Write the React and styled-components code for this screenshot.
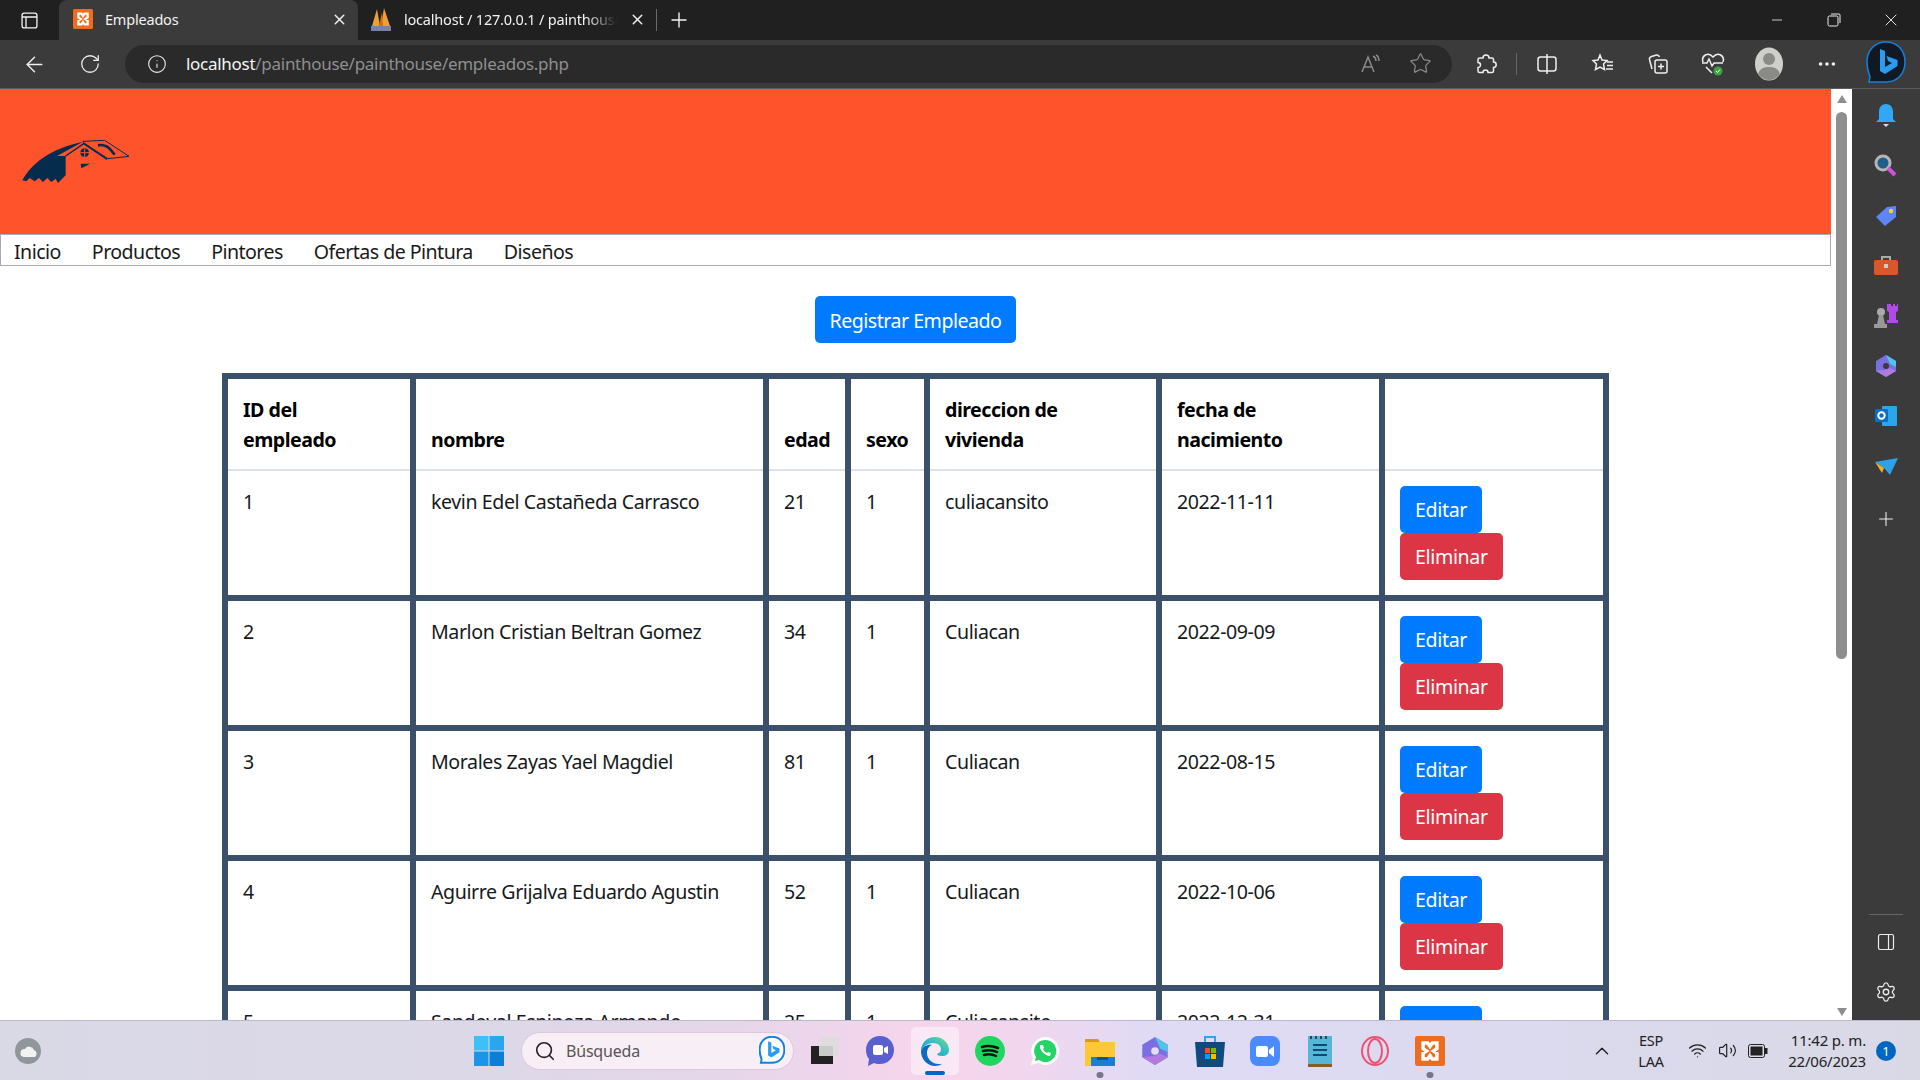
import React from 'react';
import styled, { createGlobalStyle } from 'styled-components';
import { ArrowLeft, RotateCw, Info, Star, Plus, X, Minus, MoreHorizontal, Search, ChevronUp, Wifi, Volume2, Settings, PanelRight } from 'lucide-react';

const Global = createGlobalStyle`
  html, body { margin: 0; padding: 0; height: 100%; overflow: hidden; background: #fff; }
  body { font-family: "Noto Sans", "Open Sans", sans-serif; color: #111; }
  * { box-sizing: border-box; }
`;

const Screen = styled.div`
  width: 1920px;
  height: 1080px;
  display: flex;
  flex-direction: column;
  overflow: hidden;
`;

/* browser chrome */
const TabStrip = styled.div`
  height: 40px;
  background: #202020;
  display: flex;
  align-items: stretch;
  color: #f2f2f2;
  flex: none;
`;
const StripButton = styled.div`
  width: 59px;
  display: flex;
  align-items: center;
  justify-content: center;
`;
const Tab = styled.div`
  width: ${p => p.$w}px;
  background: ${p => (p.$active ? '#3b3b3b' : 'transparent')};
  border-radius: 8px 8px 0 0;
  display: flex;
  align-items: center;
  padding: 0 10px 2px ${p => p.$pl}px;
  gap: 12px;
`;
const TabTitle = styled.span`
  flex: 1;
  font-size: 14.5px;
  letter-spacing: -0.2px;
  white-space: nowrap;
  overflow: hidden;
  ${p => p.$fade && 'mask-image: linear-gradient(90deg, #000 85%, transparent 100%);'}
`;
const StripDivider = styled.div`
  width: 1px;
  height: 22px;
  margin: 9px 0;
  background: #6a6a6a;
`;
const NewTab = styled.div`
  width: 44px;
  display: flex;
  align-items: center;
  justify-content: center;
`;
const WindowControls = styled.div`
  margin-left: auto;
  display: flex;
  padding-right: 1px;
`;
const WindowButton = styled.div`
  width: 57px;
  display: flex;
  align-items: center;
  justify-content: center;
`;
const Toolbar = styled.div`
  height: 49px;
  background: #3b3b3b;
  border-bottom: 1px solid #5c5c5c;
  display: flex;
  align-items: center;
  flex: none;
  color: #eee;
`;
const NavIcon = styled.div`
  width: ${p => p.$w || 55}px;
  margin-left: ${p => p.$ml || 0}px;
  color: ${p => (p.$dim ? '#8a8a8a' : 'inherit')};
  display: flex;
  align-items: center;
  justify-content: center;
  flex: none;
`;
const AddressBar = styled.div`
  width: 1327px;
  height: 38px;
  margin: 0 0 1px 13px;
  background: #2a2a2a;
  border-radius: 19px;
  display: flex;
  align-items: center;
  padding-left: 22px;
  flex: none;
`;
const Url = styled.div`
  margin-left: 19px;
  flex: 1;
  font-size: 17px;
  letter-spacing: -0.28px;
  color: #8f8f8f;
  & b { font-weight: 400; color: #f5f5f5; }
`;
const BarDivider = styled.div`
  width: 1px;
  height: 22px;
  background: #666;
  flex: none;
`;

/* main region */
const Body = styled.div`
  flex: 1;
  min-height: 0;
  display: flex;
`;
const Page = styled.main`
  width: 1831px;
  flex: none;
  overflow: hidden;
  background: #fff;
`;
const Header = styled.header`
  height: 145px;
  background: #ff542b;
  padding: 43px 0 0 13px;
`;
const Menu = styled.nav`
  height: 32px;
  background: #fff;
  border: 1px solid #aaaabb;
  display: flex;
  align-items: center;
  padding: 2px 0 0 13px;
  font-size: 19.6px;
  letter-spacing: -0.55px;
  color: #1a1a1a;
  & span { margin-right: 31px; }
`;
const Center = styled.div`
  padding: 30px 0;
  display: flex;
  justify-content: center;
`;
const Btn = styled.button`
  display: block;
  height: 47px;
  padding: 0 15px;
  border: 0;
  border-radius: 5px;
  background: ${p => (p.$danger ? '#dc3545' : '#007bff')};
  color: #fff;
  font-family: inherit;
  font-size: 19.6px;
  letter-spacing: -0.36px;
  white-space: nowrap;
`;
const RegisterBtn = styled(Btn)`
  padding-top: 2px;
  letter-spacing: -0.5px;
`;
const ActionStack = styled.div`
  display: flex;
  flex-direction: column;
  align-items: flex-start;
`;
const Table = styled.table`
  width: 1387px;
  margin-left: 222px;
  table-layout: fixed;
  border-collapse: collapse;
  font-size: 19.6px;
  letter-spacing: -0.42px;
  line-height: 30px;
  color: #16191c;
`;
const Th = styled.th`
  border: 6px solid #3a506b;
  border-bottom: 2px solid #dee2e6;
  padding: 16px 15px 14px;
  text-align: left;
  vertical-align: bottom;
  font-weight: 700;
  letter-spacing: -0.5px;
  color: #000;
`;
const Td = styled.td`
  border: 6px solid #3a506b;
  border-top: 0;
  padding: ${p => (p.$action ? '15px' : '16px 15px 14px')};
  vertical-align: top;
`;

/* page scrollbar + edge sidebar */
const Scrollbar = styled.div`
  width: 21px;
  flex: none;
  background: #fff;
  padding: 0 5px;
  display: flex;
  flex-direction: column;
  align-items: center;
`;
const Arrow = styled.div`
  width: 0;
  height: 0;
  flex: none;
  border-left: 5px solid transparent;
  border-right: 5px solid transparent;
  ${p => (p.$down ? 'border-top: 8px solid #8e8e8e; margin-top: auto; margin-bottom: 4px;' : 'border-bottom: 8px solid #8e8e8e; margin-top: 6px;')}
`;
const Thumb = styled.div`
  width: 11px;
  height: 547px;
  margin-top: 9px;
  background: #8e8e8e;
  border-radius: 6px;
  flex: none;
`;
const Sidebar = styled.aside`
  width: 68px;
  flex: none;
  background: #3b3b3b;
  display: flex;
  flex-direction: column;
  align-items: center;
  padding: 2px 0 3px;
  color: #eee;
`;
const SideSlot = styled.div`
  height: 50px;
  width: 100%;
  margin-top: ${p => p.$mt || 0}px;
  display: flex;
  align-items: center;
  justify-content: center;
  flex: none;
`;
const SideRule = styled.div`
  width: 34px;
  height: 1px;
  margin-top: auto;
  margin-bottom: 2px;
  background: #666;
`;

/* taskbar */
const Taskbar = styled.footer`
  height: 60px;
  flex: none;
  border-top: 1px solid #bcb7ca;
  background: linear-gradient(90deg, #d9d9e6 0%, #dcd8e8 25%, #e6d6ea 38%, #f6d5ec 48%, #f2d6ee 53%, #e0dbf5 60%, #dbdaf0 75%, #d9d9e6 100%);
  display: flex;
  align-items: center;
  color: #222;
`;
const Weather = styled.div`
  width: 461px;
  padding-left: 14px;
  flex: none;
  display: flex;
`;
const StartSlot = styled.div`
  width: 55px;
  display: flex;
  justify-content: center;
  flex: none;
`;
const SearchBox = styled.div`
  width: 273px;
  height: 38px;
  margin: 0 3px 0 5px;
  border-radius: 19px;
  background: #f8eef6;
  border: 1px solid #dcc9dc;
  display: flex;
  align-items: center;
  padding: 0 8px 0 12px;
  gap: 10px;
  flex: none;
  font-size: 16px;
  letter-spacing: -0.2px;
  color: #555;
  & span { flex: 1; }
`;
const AppSlot = styled.div`
  width: ${p => p.$w || 55}px;
  height: 48px;
  flex: none;
  display: flex;
  align-items: center;
  justify-content: center;
  position: relative;
  border-radius: 5px;
  ${p => p.$active && `
    width: 48px;
    margin: 0 3.5px;
    background: rgba(255, 255, 255, .45);
  `}
`;
const RunDot = styled.i`
  position: absolute;
  bottom: ${p => (p.$active ? 0 : -3)}px;
  left: 50%;
  transform: translateX(-50%);
  width: ${p => (p.$active ? 20 : 7)}px;
  height: ${p => (p.$active ? 4 : 6)}px;
  border-radius: 3px;
  background: ${p => (p.$active ? '#0067c0' : '#77778a')};
`;
const Tray = styled.div`
  margin-left: auto;
  display: flex;
  align-items: center;
  padding-right: 24px;
`;
const TrayText = styled.div`
  text-align: center;
  font-size: 14.5px;
  line-height: 21px;
  letter-spacing: -0.2px;
  width: ${p => p.$w}px;
  flex: none;
`;
const TrayIcons = styled.div`
  display: flex;
  align-items: center;
  gap: 11px;
  margin: 0 10px 0 11px;
`;
const ClockText = styled(TrayText)`
  text-align: right;
  font-size: 15px;
`;
const Badge = styled.div`
  width: 20px;
  height: 20px;
  margin-left: 10px;
  border-radius: 50%;
  background: #0067c0;
  color: #fff;
  font-size: 13px;
  display: flex;
  align-items: center;
  justify-content: center;
`;
const Chevron = styled(ChevronUp)`
  margin-right: 12px;
`;

const Xampp = ({ s = 26 }) => (
  <svg width={s} height={s} viewBox="0 0 26 26">
    <rect width="26" height="26" rx="2" fill="#ef6b1e" />
    <path d="M7 6h4l2 3 2-3h4v5l-3 2 3 2v5h-4l-2-3-2 3H7v-5l3-2-3-2z" fill="none" stroke="#fff" strokeWidth="3" />
  </svg>
);
const Pma = () => (
  <svg width="22" height="26" viewBox="0 0 22 26">
    <path d="M2 20 7 3l3 17zM11 20l3-18 6 18z" fill="#f0a030" />
    <path d="M9 20 12 6l1 14z" fill="#c9701a" />
    <rect x="1" y="20" width="20" height="5" fill="#7a80a8" />
  </svg>
);
const Logo = () => (
  <svg width="125" height="60" viewBox="0 0 375 180" display="block">
    <path d="M28 145C55 95 110 50 210 29L132 72h26v58l-23 23-7-13-13 10-12-12-13 12-12-12-13 10-15-10-10 10z" fill="#052c4d" />
    <path d="M158 72 212 35l70 47" fill="none" stroke="#052c4d" strokeWidth="4" />
    <path d="M210 28l65-3 73 48-63 7-73-48z" fill="none" stroke="#052c4d" strokeWidth="3" />
    <path d="M255 40c25-5 35 10 50 28" fill="none" stroke="#052c4d" strokeWidth="8" />
    <circle cx="215" cy="62" r="13" fill="#052c4d" />
    <path d="M215 49v26M202 62h26" stroke="#ff542b" strokeWidth="3" />
    <path d="M203 95h29l-27 14z" fill="#052c4d" />
  </svg>
);
const Icon = ({ children, s = 24, sw = 1.5 }) => (
  <svg width={s} height={s} viewBox="0 0 24 24" fill="none" stroke="currentColor" strokeWidth={sw}>{children}</svg>
);
const BingBubble = ({ w, h, fill, sw }) => (
  <svg width={w} height={h} viewBox="0 0 40 46">
    <path d="M20 1c11 0 19 8 19 20s-8 20-19 20H3l1-5C2 31 1 26 1 21 1 9 9 1 20 1z" fill={fill} stroke="#1380e0" strokeWidth={sw} />
    <path d="M14 8l5 2v16l7-4-4-2-1.5-5 11 4v6L19 33l-5-3z" fill="#2a9bf0" />
  </svg>
);
const CopilotMark = ({ w, h, hole }) => (
  <svg width={w} height={h} viewBox="0 0 22 24">
    <path d="M11 1l10 6v10l-10 6-10-6V7z" fill="#7a6fe0" />
    <path d="M11 1l10 6v6l-6-3z" fill="#4fc3e8" />
    <path d="M1 17l10 6 10-6-6-3-5 2z" fill="#b07adf" />
    <circle cx="11" cy="12" r="3" fill={hole} />
  </svg>
);

const empleados = [
  ['1', 'kevin Edel Castañeda Carrasco', '21', '1', 'culiacansito', '2022-11-11'],
  ['2', 'Marlon Cristian Beltran Gomez', '34', '1', 'Culiacan', '2022-09-09'],
  ['3', 'Morales Zayas Yael Magdiel', '81', '1', 'Culiacan', '2022-08-15'],
  ['4', 'Aguirre Grijalva Eduardo Agustin', '52', '1', 'Culiacan', '2022-10-06'],
  ['5', 'Sandoval Espinoza Armando', '25', '1', 'Culiacansito', '2022-12-31'],
];

const sideIcons = [
  <svg key="bell" width="24" height="26" viewBox="0 0 24 26"><path d="M12 1c5 0 7 4 7 8v7l3 3H2l3-3V9c0-4 2-8 7-8z" fill="#31a8f5" /><path d="M9 21h6l-3 3z" fill="#ddd" /></svg>,
  <svg key="search" width="24" height="24" viewBox="0 0 24 24"><circle cx="9" cy="9" r="7" fill="#1d5f8a" stroke="#b5b5b5" strokeWidth="3" /><path d="M14 14l7 7" stroke="#d24fdc" strokeWidth="4" /></svg>,
  <svg key="tag" width="22" height="22" viewBox="0 0 22 22"><path d="M1 12 12 2l9-1v11L10 21z" fill="#5f84f5" /><circle cx="16" cy="6" r="2.2" fill="#f7d51d" /></svg>,
  <svg key="box" width="24" height="22" viewBox="0 0 24 22"><path d="M8 5V2h8v3" fill="none" stroke="#aaa" strokeWidth="2" /><rect y="5" width="24" height="15" rx="2" fill="#d9572b" /><rect x="10" y="9" width="4" height="4" fill="#ccc" /></svg>,
  <svg key="chess" width="26" height="26" viewBox="0 0 26 26"><path d="M16 1h2v2h2V1h2v2h2V1h1v7l-2 1v8h2v3H14v-3h2V9l-2-1V1z" fill="#b14ae8" /><circle cx="8" cy="9" r="4" fill="#aaa" /><path d="M6 12h4l2 9h2v4H1v-4h3z" fill="#999" /></svg>,
  <CopilotMark key="copilot" w={22} h={24} hole="#3b3b3b" />,
  <svg key="outlook" width="22" height="22" viewBox="0 0 22 22"><rect x="7" y="1" width="15" height="20" rx="1" fill="#28a8ea" /><rect y="4" width="13" height="13" rx="1" fill="#0b6dc4" /><circle cx="6.5" cy="10.5" r="3.2" fill="none" stroke="#fff" strokeWidth="2" /></svg>,
  <svg key="send" width="24" height="20" viewBox="0 0 24 20"><path d="M1 6l23-4-8 17-6-7z" fill="#2fa0ea" /><path d="M1 6l9 6-2 5z" fill="#f2b01e" /></svg>,
];

export default function App() {
  return (
    <Screen>
      <Global />
      <TabStrip>
        <StripButton>
          <Icon s={21}><rect x="3.5" y="3.5" width="17" height="17" rx="2.5" /><path d="M3.5 8h17M8 8v12.5" /></Icon>
        </StripButton>
        <Tab $active $w={299} $pl={14}>
          <Xampp s={20} />
          <TabTitle>Empleados</TabTitle>
          <X size={17} />
        </Tab>
        <Tab $w={298} $pl={12}>
          <Pma />
          <TabTitle $fade>localhost / 127.0.0.1 / painthouse</TabTitle>
          <X size={17} />
        </Tab>
        <StripDivider />
        <NewTab><Plus size={24} strokeWidth={1.4} /></NewTab>
        <WindowControls>
          <WindowButton><Minus size={16} strokeWidth={1.2} /></WindowButton>
          <WindowButton>
            <svg width="14" height="14" viewBox="0 0 14 14" fill="none" stroke="#eee"><rect x="1" y="3" width="10" height="10" rx="1.5" /><path d="M4 1h8a1 1 0 0 1 1 1v8" /></svg>
          </WindowButton>
          <WindowButton><X size={20} strokeWidth={1.1} /></WindowButton>
        </WindowControls>
      </TabStrip>
      <Toolbar>
        <NavIcon $w={68}><ArrowLeft size={25} strokeWidth={1.4} /></NavIcon>
        <NavIcon $w={44}><RotateCw size={22} strokeWidth={1.4} /></NavIcon>
        <AddressBar>
          <Info size={20} strokeWidth={1.3} />
          <Url><b>localhost</b>/painthouse/painthouse/empleados.php</Url>
          <NavIcon $w={50} $dim>
            <Icon><path d="M4 20 10 5l6 15M6.5 15h7" /><path d="M15 4c2 1 3 3 3 5M18 3c2 1 3 3 3 6" /></Icon>
          </NavIcon>
          <NavIcon $w={50} $dim><Star size={23} strokeWidth={1.3} /></NavIcon>
          <NavIcon $w={7} />
        </AddressBar>
        <NavIcon $w={60} $ml={4}>
          <Icon><path d="M9 6a3 3 0 0 1 6 0h3a1.5 1.5 0 0 1 1.5 1.5V10a2.7 2.7 0 0 1 0 5.4V19a1.5 1.5 0 0 1-1.5 1.5H14a2.5 2.5 0 0 0-5 0H5.5A1.5 1.5 0 0 1 4 19v-3.5a2.5 2.5 0 0 0 0-5V7.5A1.5 1.5 0 0 1 5.5 6z" /></Icon>
        </NavIcon>
        <BarDivider />
        <NavIcon $w={60}><Icon><rect x="3" y="5" width="18" height="14" rx="2.5" /><path d="M12 2v20" /></Icon></NavIcon>
        <NavIcon $w={52}><Icon><path d="M9 3l2 5 5 .5-3.5 3.5 1 5.5L9 15l-4.5 2.5 1-5.5L2 8.5 7 8zM16 10h6M16 13.5h6M15 17h7" /></Icon></NavIcon>
        <NavIcon $w={58}><Icon><rect x="9" y="8" width="12" height="13" rx="2" /><path d="M15 11.5v6M12 14.5h6M6 17 3.5 7.5c-.3-1.5.5-2.5 2-3l5-1.5c1.5-.3 2.5.3 3 2" /></Icon></NavIcon>
        <NavIcon $w={52}>
          <svg width="24" height="26" viewBox="0 0 24 26" fill="none" stroke="#eee" strokeWidth="1.5"><path d="M2 11C0 5 7 0 12 6c5-6 12-1 10 5M1 12h5l2-4 3 7 2-3h9M5 16l6 6" /><circle cx="17" cy="20" r="4.5" fill="#3fa142" stroke="none" /><path d="M15 20l1.5 1.5 2.5-3" stroke="#fff" strokeWidth="1" /></svg>
        </NavIcon>
        <NavIcon $w={60}>
          <svg width="30" height="34" viewBox="0 0 30 34"><ellipse cx="15" cy="17" rx="14" ry="16.5" fill="#cfcfca" /><circle cx="15" cy="12" r="6" fill="#8a8a86" /><path d="M4 27c2-6 6-7 11-7s9 1 11 7c-3 4-7 6-11 6S7 31 4 27z" fill="#8a8a86" /></svg>
        </NavIcon>
        <NavIcon $w={56}><MoreHorizontal size={22} /></NavIcon>
        <NavIcon $w={62}><BingBubble w={40} h={46} fill="#111a24" sw={1.5} /></NavIcon>
      </Toolbar>

      <Body>
        <Page>
          <Header><Logo /></Header>
          <Menu>
            <span>Inicio</span>
            <span>Productos</span>
            <span>Pintores</span>
            <span>Ofertas de Pintura</span>
            <span>Diseños</span>
          </Menu>
          <Center><RegisterBtn>Registrar Empleado</RegisterBtn></Center>
          <Table>
            <colgroup>
              <col style={{ width: 188 }} /><col style={{ width: 353 }} /><col style={{ width: 82 }} /><col style={{ width: 79 }} />
              <col style={{ width: 232 }} /><col style={{ width: 223 }} /><col style={{ width: 224 }} />
            </colgroup>
            <thead>
              <tr>
                <Th>ID del<br />empleado</Th>
                <Th>nombre</Th>
                <Th>edad</Th>
                <Th>sexo</Th>
                <Th>direccion de<br />vivienda</Th>
                <Th>fecha de<br />nacimiento</Th>
                <Th />
              </tr>
            </thead>
            <tbody>
              {empleados.map(e => (
                <tr key={e[0]}>
                  {e.map((v, i) => <Td key={i}>{v}</Td>)}
                  <Td $action>
                    <ActionStack>
                      <Btn>Editar</Btn>
                      <Btn $danger>Eliminar</Btn>
                    </ActionStack>
                  </Td>
                </tr>
              ))}
            </tbody>
          </Table>
        </Page>
        <Scrollbar>
          <Arrow />
          <Thumb />
          <Arrow $down />
        </Scrollbar>
        <Sidebar>
          {sideIcons.map(ic => <SideSlot key={ic.key}>{ic}</SideSlot>)}
          <SideSlot $mt={3}><Plus size={22} strokeWidth={1.2} /></SideSlot>
          <SideRule />
          <SideSlot><PanelRight size={20} strokeWidth={1.4} /></SideSlot>
          <SideSlot><Settings size={22} strokeWidth={1.4} /></SideSlot>
        </Sidebar>
      </Body>

      <Taskbar>
        <Weather>
          <svg width="28" height="28" viewBox="0 0 28 28"><circle cx="14" cy="14" r="13" fill="#90969c" /><path d="M10 20a4 4 0 0 1 1-8 5 5 0 0 1 9 1 4 4 0 0 1 1 7z" fill="#f2f2f2" /></svg>
        </Weather>
        <StartSlot>
          <svg width="30" height="30" viewBox="0 0 30 30"><rect width="14.5" height="14.5" fill="#3cc0f5" /><rect x="15.5" width="14.5" height="14.5" fill="#2aa5ee" /><rect y="15.5" width="14.5" height="14.5" fill="#1a95e8" /><rect x="15.5" y="15.5" width="14.5" height="14.5" fill="#0b7fd8" /></svg>
        </StartSlot>
        <SearchBox>
          <Search size={22} strokeWidth={1.8} color="#222" />
          <span>Búsqueda</span>
          <BingBubble w={26} h={30} fill="#fff" sw={3} />
        </SearchBox>
        <AppSlot>
          <svg width="30" height="30" viewBox="0 0 30 30"><rect x="1" y="10" width="22" height="18" fill="#222" /><rect x="9" y="1" width="20" height="19" fill="#ddd" opacity=".9" /></svg>
        </AppSlot>
        <AppSlot>
          <svg width="30" height="32" viewBox="0 0 30 32"><path d="M15 1c8 0 14 6 14 14s-6 14-14 14c-2 0-4 0-6-1l-6 3 1-7C2 22 1 18 1 15 1 7 7 1 15 1z" fill="#5a5fd0" /><rect x="8" y="10" width="10" height="10" rx="2" fill="#fff" /><path d="M19 13l4-2v8l-4-2z" fill="#fff" /></svg>
        </AppSlot>
        <AppSlot $active>
          <svg width="32" height="32" viewBox="0 0 32 32">
            <defs>
              <linearGradient id="edgeTop" x1="0" y1="1" x2="1" y2="0"><stop offset="0" stopColor="#1b8ee0" /><stop offset=".6" stopColor="#33c3c0" /><stop offset="1" stopColor="#7fe07a" /></linearGradient>
            </defs>
            <path d="M2 16C2 8 8 2 16 2c8 0 14 6 14 13 0 4-3 6-7 6-3 0-5-1-5-2 3-1 4-3 4-5 0-3-3-6-8-6-6 0-10 4-12 8z" fill="url(#edgeTop)" />
            <path d="M2 16c2-5 7-7 11-6-3 1-5 4-5 8 0 6 5 11 12 11 2 0 3 0 4-1-2 2-5 3-8 3C8 31 2 24 2 16z" fill="#0c6cc2" />
          </svg>
          <RunDot $active />
        </AppSlot>
        <AppSlot>
          <svg width="30" height="30" viewBox="0 0 30 30"><circle cx="15" cy="15" r="15" fill="#1ed760" /><path d="M7 11c6-2 11-1 16 1M8 15c5-1 10-1 14 1M9 19c4-1 8-1 12 1" stroke="#111" strokeWidth="2.5" fill="none" strokeLinecap="round" /></svg>
        </AppSlot>
        <AppSlot>
          <svg width="30" height="30" viewBox="0 0 30 30"><path d="M15 1a14 14 0 1 1-7 26l-7 2 2-7A14 14 0 0 1 15 1z" fill="#fff" /><path d="M15 4a11 11 0 1 1-6 20l-4 1 1-4A11 11 0 0 1 15 4z" fill="#25d366" /><path d="M10 9c-1 5 5 11 10 11l1-3-3-1-1 1c-2-1-3-2-4-4l1-1-1-3z" fill="#fff" /></svg>
        </AppSlot>
        <AppSlot>
          <svg width="30" height="30" viewBox="0 0 30 30"><path d="M0 3h13l2 3h15v24H0z" fill="#fcc835" /><path d="M0 3h13l2 3H0z" fill="#d99a1c" /><rect x="6" y="21" width="24" height="9" fill="#1a7fcf" /><rect x="12" y="21" width="11" height="3" fill="#11528c" /></svg>
          <RunDot />
        </AppSlot>
        <AppSlot><CopilotMark w={28} h={32} hole="#eadcf0" /></AppSlot>
        <AppSlot>
          <svg width="30" height="32" viewBox="0 0 30 32"><path d="M10 8V2h10v6" fill="none" stroke="#2aa5ee" strokeWidth="2" /><path d="M0 7h30l-2 25H2z" fill="#104a80" /><rect x="10" y="13" width="5" height="5" fill="#f25022" /><rect x="16" y="13" width="5" height="5" fill="#7fba00" /><rect x="10" y="19" width="5" height="5" fill="#00a4ef" /><rect x="16" y="19" width="5" height="5" fill="#ffb900" /></svg>
        </AppSlot>
        <AppSlot>
          <svg width="30" height="30" viewBox="0 0 30 30"><rect width="30" height="30" rx="8" fill="#4a8cff" /><rect x="6" y="10" width="12" height="11" rx="2" fill="#fff" /><path d="M19 14l5-4v11l-5-4z" fill="#fff" /></svg>
        </AppSlot>
        <AppSlot>
          <svg width="24" height="32" viewBox="0 0 24 32"><rect width="24" height="30" y="1" fill="#55b6d8" /><rect y="29" width="24" height="3" fill="#8b5a2b" /><path d="M5 10h14M5 15h14M5 20h14" stroke="#104a70" strokeWidth="2" /><path d="M3 1v3M8 1v3M13 1v3M18 1v3" stroke="#222" strokeWidth="1.5" /></svg>
        </AppSlot>
        <AppSlot>
          <svg width="30" height="30" viewBox="0 0 30 30" fill="none" stroke="#f05070" strokeWidth="2"><ellipse cx="15" cy="15" rx="13" ry="14" /><ellipse cx="15" cy="15" rx="7" ry="12" /></svg>
        </AppSlot>
        <AppSlot>
          <Xampp s={30} />
          <RunDot />
        </AppSlot>
        <Tray>
          <Chevron size={22} strokeWidth={1.6} />
          <TrayText $w={52}>ESP<br />LAA</TrayText>
          <TrayIcons>
            <Wifi size={19} strokeWidth={1.6} />
            <Volume2 size={19} strokeWidth={1.5} />
            <svg width="20" height="14" viewBox="0 0 20 14"><rect x=".5" y=".5" width="16" height="13" rx="2" fill="none" stroke="#222" /><rect x="2.5" y="2.5" width="12" height="9" fill="#222" /><rect x="17" y="4" width="2.5" height="6" fill="#222" /></svg>
          </TrayIcons>
          <ClockText $w={88}>11:42 p. m.<br />22/06/2023</ClockText>
          <Badge>1</Badge>
        </Tray>
      </Taskbar>
    </Screen>
  );
}
